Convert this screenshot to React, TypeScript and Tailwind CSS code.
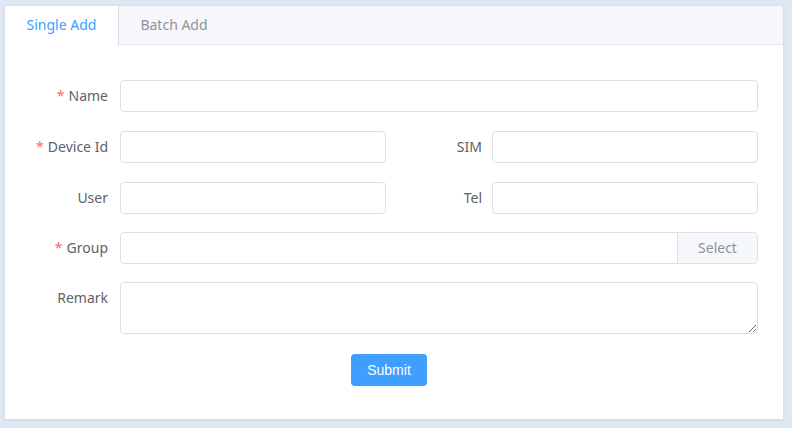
import React from "react";

const font = { fontFamily: '"Noto Sans", "Open Sans", sans-serif' };

function Label({ text, req, w, pr = "pr-3" }: { text: string; req?: boolean; w: string; pr?: string }) {
  return (
    <div className={`${w} ${pr} shrink-0 text-right text-[14px] text-[#606266] leading-[32px]`}>
      {req && <span className="text-[#f56c6c] mr-1">*</span>}
      {text}
    </div>
  );
}

function Input({ w }: { w: string }) {
  return (
    <input
      className={`${w} h-[32px] rounded-[4px] border border-[#dcdfe6] bg-white outline-none px-3 text-[14px]`}
    />
  );
}

export default function App() {
  return (
    <div className="w-[792px] h-[428px] bg-[#dfe7f3] pt-[5px] pl-[4px]" style={font}>
      <div className="w-[780px] h-[415px] bg-white border border-[#dcdfe6] shadow-[0_1px_2px_rgba(0,0,0,0.06)]">
        <div className="flex h-[39px] bg-[#f5f7fa] border-b border-[#e4e7ed]">
          <div className="w-[114px] h-[40px] pb-[3px] bg-white border-r border-[#dcdfe6] flex items-center justify-center text-[14px] text-[#409eff]">
            Single Add
          </div>
          <div className="w-[110px] pb-[2px] flex items-center justify-center text-[14px] text-[#909399]">
            Batch Add
          </div>
        </div>
        <div className="pt-[35px] pl-[15px] flex flex-col gap-[18px]">
          <div className="flex">
            <Label text="Name" req w="w-[100px]" />
            <Input w="w-[638px]" />
          </div>
          <div className="flex mt-[1px]">
            <Label text="Device Id" req w="w-[100px]" />
            <Input w="w-[266px]" />
            <Label text="SIM" w="w-[106px]" pr="pr-[10px]" />
            <Input w="w-[266px]" />
          </div>
          <div className="flex mt-[1px]">
            <Label text="User" w="w-[100px]" />
            <Input w="w-[266px]" />
            <Label text="Tel" w="w-[106px]" pr="pr-[10px]" />
            <Input w="w-[266px]" />
          </div>
          <div className="flex">
            <Label text="Group" req w="w-[100px]" />
            <div className="flex w-[638px] h-[32px] rounded-[4px] border border-[#dcdfe6] overflow-hidden">
              <input className="flex-1 outline-none px-3" />
              <div className="w-[80px] pb-[2px] bg-[#f5f7fa] border-l border-[#dcdfe6] flex items-center justify-center text-[14px] text-[#909399]">
                Select
              </div>
            </div>
          </div>
          <div className="flex">
            <Label text="Remark" w="w-[100px]" />
            <textarea className="w-[638px] h-[52px] rounded-[4px] border border-[#dcdfe6] outline-none px-3 py-1 text-[14px]" />
          </div>
        </div>
        <div className="flex justify-center pt-[20px] pr-[10px]">
          <button
            className="w-[76px] h-[32px] rounded-[4px] bg-[#409eff] text-white text-[14px]"
            style={{ fontFamily: '"Liberation Sans", Arial, sans-serif' }}
          >
            Submit
          </button>
        </div>
      </div>
    </div>
  );
}
